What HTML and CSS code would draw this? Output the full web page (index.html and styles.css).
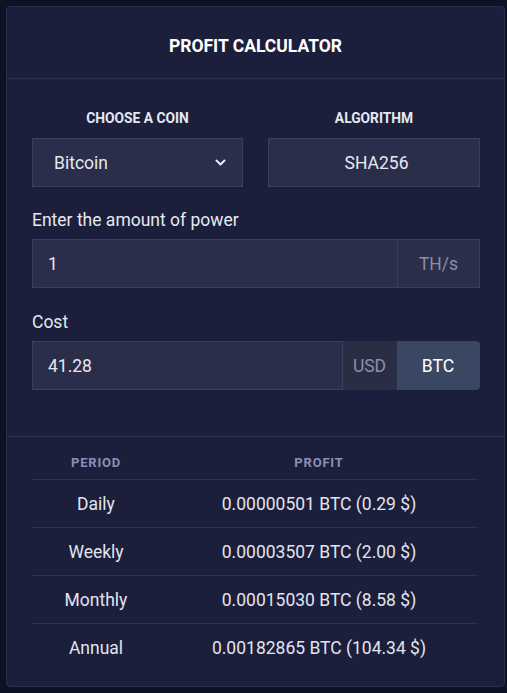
FILE: index.html
```html
<!DOCTYPE html>
<html lang="en">

<head>
    <meta charset="UTF-8">
    <meta name="viewport" content="width=device-width, initial-scale=1.0">
    <title>Profit Calculator</title>
    <link rel="stylesheet" href="styles.css">
</head>

<body>
    <div class="card">
        <div class="card-header">PROFIT CALCULATOR</div>

        <div class="card-body">
            <div class="row-two">
                <div class="field">
                    <div class="label-caps">CHOOSE A COIN</div>
                    <div class="box select">
                        <span>Bitcoin</span>
                        <svg class="chevron" width="11" height="7" viewBox="0 0 11 7">
                            <path d="M1.5 1.5 L5.5 5.5 L9.5 1.5" fill="none" stroke="#e8eaf2" stroke-width="2"
                                stroke-linecap="round" stroke-linejoin="round" />
                        </svg>
                    </div>
                </div>
                <div class="field">
                    <div class="label-caps">ALGORITHM</div>
                    <div class="box center">SHA256</div>
                </div>
            </div>

            <div class="label">Enter the amount of power</div>
            <div class="input-group">
                <div class="box grow">1</div>
                <div class="addon">TH/s</div>
            </div>

            <div class="label">Cost</div>
            <div class="input-group">
                <div class="box grow">41.28</div>
                <div class="addon usd">USD</div>
                <div class="addon btc">BTC</div>
            </div>
        </div>

        <div class="results">
            <table>
                <thead>
                    <tr>
                        <th class="col-period">PERIOD</th>
                        <th>PROFIT</th>
                    </tr>
                </thead>
                <tbody>
                    <tr>
                        <td>Daily</td>
                        <td>0.00000501 BTC (0.29 $)</td>
                    </tr>
                    <tr>
                        <td>Weekly</td>
                        <td>0.00003507 BTC (2.00 $)</td>
                    </tr>
                    <tr>
                        <td>Monthly</td>
                        <td>0.00015030 BTC (8.58 $)</td>
                    </tr>
                    <tr>
                        <td>Annual</td>
                        <td>0.00182865 BTC (104.34 $)</td>
                    </tr>
                </tbody>
            </table>
        </div>
    </div>
</body>

</html>
```

FILE: styles.css
```css
body {
    margin: 0;
    padding: 6px 2px 6px 6px;
    background: #0e1225;
    font-family: Roboto, "Liberation Sans", sans-serif;
    color: #e6e8f1;
}

.card {
    background: #1b1f3b;
    border: 1px solid #2a2f4c;
    border-radius: 4px;
    height: 679px;
}

.card-header {
    height: 72px;
    padding-top: 6px;
    box-sizing: border-box;
    display: flex;
    align-items: center;
    justify-content: center;
    font-size: 17.5px;
    font-weight: 700;
    color: #fff;
    border-bottom: 1px solid #2b3050;
}

.card-body {
    padding: 31px 24px 46px 25px;
    border-bottom: 1px solid #2b3050;
}

.row-two {
    display: grid;
    grid-template-columns: 211px 212px;
    column-gap: 25px;
    margin-bottom: 23px;
}

.label-caps {
    font-size: 13.8px;
    font-weight: 700;
    line-height: 16px;
    text-align: center;
    margin-bottom: 12px;
}

.box {
    height: 49px;
    box-sizing: border-box;
    background: #2a2e4a;
    border: 1px solid #3a3f5d;
    font-size: 17.5px;
    display: flex;
    align-items: center;
    padding: 0 16px 0 21px;
}

.select {
    justify-content: space-between;
}

.center {
    justify-content: center;
}

.label {
    font-size: 17.5px;
    line-height: 20px;
    margin-bottom: 9px;
}

.input-group {
    display: flex;
    height: 49px;
    margin-bottom: 24px;
}

.input-group:last-child {
    margin-bottom: 0;
}

.grow {
    flex: 1;
    padding-left: 15px;
}

.addon {
    width: 82px;
    box-sizing: border-box;
    display: flex;
    align-items: center;
    justify-content: center;
    background: #2b2f49;
    border: 1px solid #3a3f5d;
    border-left: none;
    color: #8a8fa8;
    font-size: 17.5px;
}

.addon.usd {
    width: 54px;
    background: #2a2e45;
    border-color: #2a2e45;
}

.addon.btc {
    width: 83px;
    background: #3a4763;
    border-color: #3a4763;
    color: #fff;
    border-radius: 0 4px 4px 0;
}

.results {
    padding: 18px 26px 0 25px;
}

table {
    width: 100%;
    border-collapse: collapse;
}

th {
    font-size: 13px;
    font-weight: 700;
    letter-spacing: 0.8px;
    color: #8a90b5;
    line-height: 16px;
    padding: 0 0 8px;
    border-bottom: 1px solid #2c3152;
}

.col-period {
    width: 128px;
}

td {
    text-align: center;
    font-size: 17.5px;
    height: 47px;
    padding: 0;
    color: #e2e4ee;
}

tbody tr {
    border-bottom: 1px solid #2c3152;
}

tbody tr:last-child {
    border-bottom: none;
}
```
